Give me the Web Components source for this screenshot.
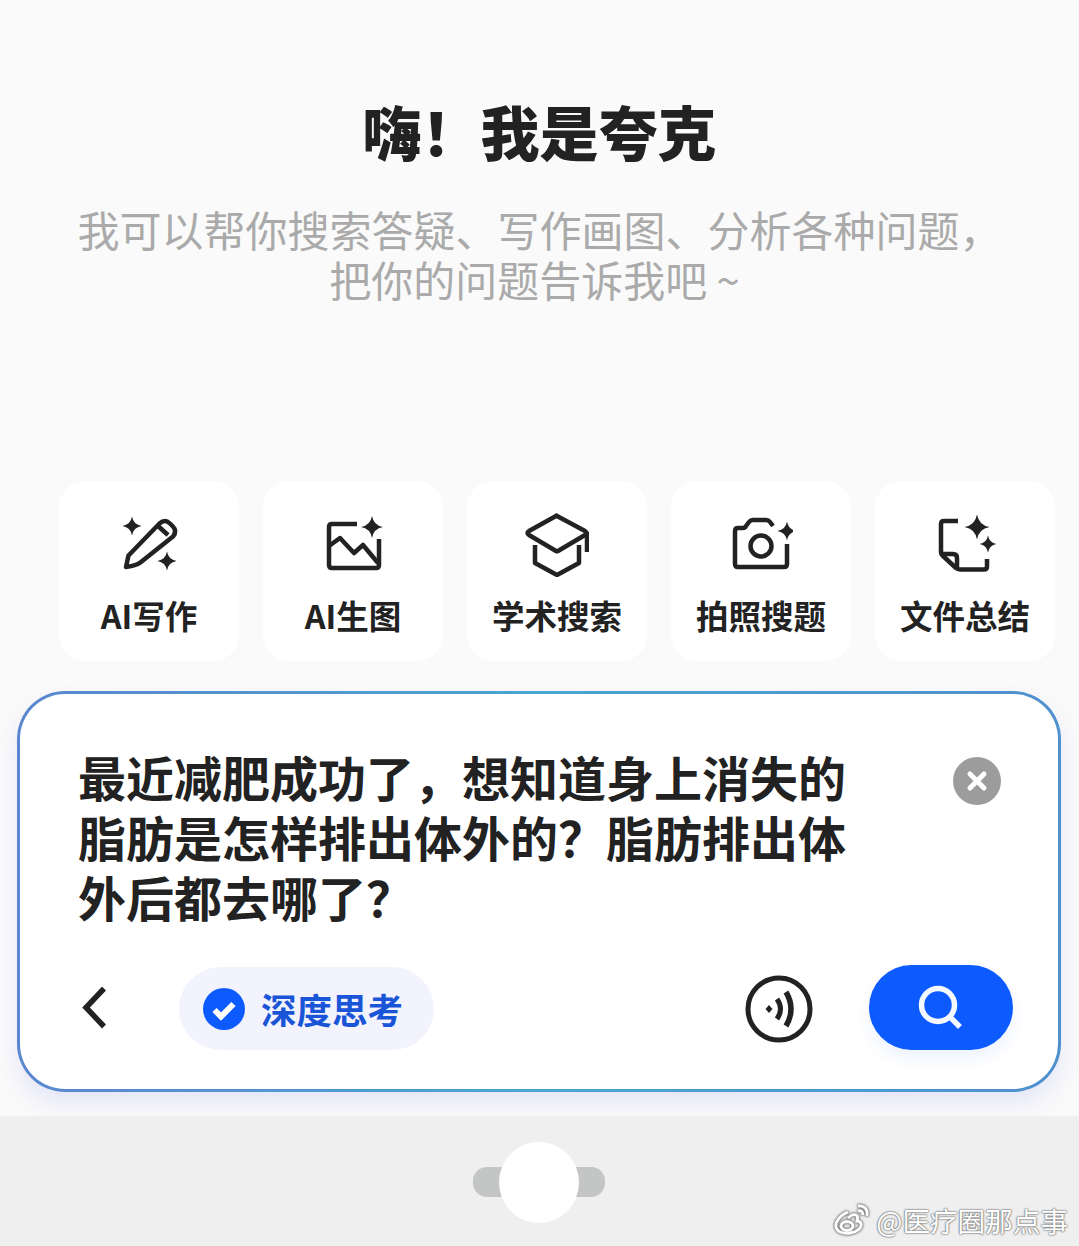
<!DOCTYPE html>
<html lang="zh">
<head>
<meta charset="utf-8">
<title>夸克</title>
<style>
    html, body { margin: 0; padding: 0; }
    body {
        width: 1079px;
        height: 1246px;
        overflow: hidden;
        background: #fafafa;
        font-family: "Noto Sans CJK SC", "Noto Sans", sans-serif;
    }
</style>
</head>
<body>
<quark-page>
    <quark-hero slot="hero">
        <span slot="title">嗨！我是夸克</span>
        我可以帮你搜索答疑、写作画图、分析各种问题，<br>把你的问题告诉我吧 <span style="margin-right: 10px">~</span>
    </quark-hero>
    <tool-card slot="tools" icon="write">AI写作</tool-card>
    <tool-card slot="tools" icon="image">AI生图</tool-card>
    <tool-card slot="tools" icon="study">学术搜索</tool-card>
    <tool-card slot="tools" icon="camera">拍照搜题</tool-card>
    <tool-card slot="tools" icon="file">文件总结</tool-card>
    <search-box slot="search">最近减肥成功了，想知道身上消失的<br>脂肪是怎样排出体外的？脂肪排出体<br>外后都去哪了？</search-box>
    <home-bar slot="bar"></home-bar>
</quark-page>

<script>
const star = (x, y, r) => `<path fill="#222" stroke="none" d="M${x} ${y - r}Q${x + r * .15} ${y - r * .15} ${x + r} ${y}Q${x + r * .15} ${y + r * .15} ${x} ${y + r}Q${x - r * .15} ${y + r * .15} ${x - r} ${y}Q${x - r * .15} ${y - r * .15} ${x} ${y - r}Z"/>`;

const toolIcons = {
    write: `<path d="M9 54l2.500-11.500L42.500 10.500q5.500-5 10.500 0l2.500 2.500q5 5 .5 10.500L24 49q-4 3.500-15 5z"/><path d="M41 13l10 9"/>` + star(15, 13, 9.500) + star(50, 48, 9.500),
    image: `<path d="M36 11H11q-3 0-3 3v38q0 3 3 3h44q3 0 3-3V26"/><path d="M8 33l11-8 14 15 9-8 15 18"/>` + star(51, 14, 11),
    study: `<path d="M32 3l28 15q3 2 0 4L33 38q-1 .5-2 0L4 22q-3-2 0-4L31 3q.5-.5 1 0z"/><path d="M10 32v18l22 12 22-12V32"/><path d="M62 19v20"/>`,
    camera: `<path d="M44 13l-3-4q-1.500-2-4-2H24q-2.500 0-4 2l-3 4q-1 2-3 2H9q-3 0-3 3v33q0 3 3 3h46q3 0 3-3V31"/><circle cx="32" cy="33" r="10.500"/>` + star(58, 18, 9.500),
    file: `<path d="M25 8H11q-3 0-3 3v28q0 2 1.500 3.500L23 55q1.500 1.500 4 1.500h24q3 0 3-3V46"/><path d="M8 41h12q4 0 4 4v11"/>` + star(44, 14, 12.500) + star(55, 31, 8.500)
};

class QuarkPage extends HTMLElement {
    constructor() {
        super();
        this.attachShadow({mode: 'open'});
        this.shadowRoot.innerHTML = `
        <style>
            :host {
                display: flex;
                flex-direction: column;
                width: 1079px;
                height: 1246px;
            }
            .tools {
                display: flex;
                gap: 24px;
                padding-left: 59px;
                margin-top: 177px;
            }
            .search {
                display: block;
                margin: 30px 18px 0 17px;
            }
            .bar {
                display: block;
                margin-top: auto;
            }
        </style>
        <slot name="hero"></slot>
        <div class="tools"><slot name="tools"></slot></div>
        <div class="search"><slot name="search"></slot></div>
        <div class="bar"><slot name="bar"></slot></div>
        `;
    }
}

class QuarkHero extends HTMLElement {
    constructor() {
        super();
        this.attachShadow({mode: 'open'});
        this.shadowRoot.innerHTML = `
        <style>
            :host {
                display: block;
                padding-top: 92px;
                text-align: center;
            }
            h1 {
                margin: 0;
                font-size: 59px;
                line-height: 78px;
                font-weight: 900;
                color: #222;
            }
            p {
                margin: 34px 0 0 0;
                font-size: 42px;
                line-height: 50px;
                color: #aaaaaa;
            }
        </style>
        <h1><slot name="title"></slot></h1>
        <p><slot></slot></p>
        `;
    }
}

class ToolCard extends HTMLElement {
    constructor() {
        super();
        this.attachShadow({mode: 'open'});
        this.shadowRoot.innerHTML = `
        <style>
            :host {
                display: flex;
                flex-direction: column;
                align-items: center;
                box-sizing: border-box;
                width: 180px;
                height: 180px;
                padding-top: 32px;
                background: #fff;
                border-radius: 26px;
                color: #222;
            }
            svg {
                width: 64px;
                height: 64px;
                fill: none;
                stroke: #222;
                stroke-width: 4.500;
                stroke-linejoin: round;
                stroke-linecap: butt;
            }
            span {
                margin-top: 15px;
                font-size: 32.500px;
                line-height: 46px;
                font-weight: 700;
            }
        </style>
        <svg viewBox="0 0 64 64" id="icon"></svg>
        <span><slot></slot></span>
        `;
    }

    connectedCallback() {
        this.shadowRoot.querySelector('#icon').innerHTML = toolIcons[this.getAttribute('icon')];
    }
}

class SearchBox extends HTMLElement {
    constructor() {
        super();
        this.attachShadow({mode: 'open'});
        this.shadowRoot.innerHTML = `
        <style>
            :host {
                display: block;
                position: relative;
                box-sizing: border-box;
                height: 401px;
                padding: 52px 58px 0 58px;
                border: 3.500px solid transparent;
                border-radius: 48px;
                background:
                    linear-gradient(#fff, #fff) padding-box,
                    linear-gradient(90deg, #5a86cf 0%, #4aa6d0 50%, #4f90cf 100%) border-box;
                box-shadow: 0 12px 22px rgba(80, 90, 240, 0.12);
            }
            .question {
                min-height: 180px;
                font-size: 48px;
                line-height: 60px;
                font-weight: 700;
                color: #222;
            }
            .close {
                position: absolute;
                top: 63px;
                right: 57px;
                width: 48px;
                height: 48px;
            }
            .actions {
                display: flex;
                align-items: center;
                margin-top: 41px;
                margin-left: 2px;
            }
            .back { width: 30px; height: 44px; }
            .think {
                display: flex;
                align-items: center;
                gap: 16px;
                box-sizing: border-box;
                width: 255px;
                height: 83px;
                margin-left: 69px;
                padding-left: 24px;
                border-radius: 42px;
                background: #f2f3fd;
                font-size: 35.500px;
                font-weight: 700;
                color: #1a55d8;
            }
            .think svg { width: 42px; height: 42px; }
            .voice { width: 68px; height: 68px; margin-left: auto; }
            .go {
                display: flex;
                align-items: center;
                justify-content: center;
                width: 144px;
                height: 85px;
                margin-left: 56px;
                margin-right: -13px;
                margin-top: -2px;
                border-radius: 43px;
                background: #0d5bff;
                box-shadow: 0 8px 16px rgba(13, 91, 255, 0.08);
            }
            .go svg { width: 46px; height: 46px; }
        </style>
        <div class="question"><slot></slot></div>
        <svg class="close" viewBox="0 0 48 48">
            <circle cx="24" cy="24" r="24" fill="#9c9c9c"/>
            <path d="M17 17l14 14M31 17L17 31" stroke="#fff" stroke-width="5" stroke-linecap="round"/>
        </svg>
        <div class="actions">
            <svg class="back" viewBox="0 0 30 44" fill="none" stroke="#222" stroke-width="5.500">
                <path d="M24 1.500L6 20.500l18 19"/>
            </svg>
            <div class="think">
                <svg viewBox="0 0 42 42">
                    <circle cx="21" cy="21" r="21" fill="#0d5bff"/>
                    <path d="M11.500 22l6.500 6.500L30.500 16" fill="none" stroke="#fff" stroke-width="6"/>
                </svg>
                <span>深度思考</span>
            </div>
            <svg class="voice" viewBox="0 0 68 68" fill="none" stroke="#222">
                <circle cx="34" cy="34" r="31" stroke-width="5"/>
                <path d="M24 30l-3.500 4 3.500 4 3.500-4z" fill="#222" stroke="none"/>
                <path d="M32 24q7 10 0 20" stroke-width="5"/>
                <path d="M41 17q10 17 0 34" stroke-width="5.500"/>
            </svg>
            <div class="go">
                <svg viewBox="0 0 46 46" fill="none" stroke="#f4f8ff" stroke-width="5.500">
                    <circle cx="20" cy="20" r="16.500"/>
                    <path d="M32 32l10 10"/>
                </svg>
            </div>
        </div>
        `;
    }
}

class HomeBar extends HTMLElement {
    constructor() {
        super();
        this.attachShadow({mode: 'open'});
        this.shadowRoot.innerHTML = `
        <style>
            :host {
                display: flex;
                align-items: center;
                justify-content: center;
                position: relative;
                height: 130px;
                background: #efefef;
            }
            .pill {
                position: relative;
                width: 132px;
                height: 30px;
                margin: 2px 2px 0 0;
                border-radius: 14px;
                background: #c4c6c6;
            }
            .knob {
                position: absolute;
                left: 26px;
                top: -25px;
                width: 80px;
                height: 81px;
                border-radius: 50%;
                background: #fff;
            }
            .mark {
                position: absolute;
                right: 11px;
                bottom: 8px;
                display: flex;
                align-items: center;
                gap: 6px;
                font-size: 27.600px;
                line-height: 36px;
                color: #fff;
                text-shadow: 0 0 2px #777, 0 0 2px #777, 0 0 1px #777;
            }
            .mark svg { width: 36px; height: 32px; margin-top: -2px; filter: drop-shadow(0 0 1px #777) drop-shadow(0 0 1px #777); }
        </style>
        <div class="pill"><div class="knob"></div></div>
        <div class="mark">
            <svg viewBox="0 0 36 32" fill="none" stroke="#fff" stroke-width="2.800">
                <path d="M14 9C6 12 1 19 2 24c1 5 8 7 14 6 7-1 12-5 11-9-.5-2-2-3-4-3 1-3 1-5-1-6-2-1-5 0-8 3"/>
                <ellipse cx="13" cy="23" rx="6" ry="4.500"/>
                <path d="M24 8c3-1 5 1 5 4M24 3c6-1 10 3 9 10"/>
            </svg>
            <span>@医疗圈那点事</span>
        </div>
        `;
    }
}

window.customElements.define('quark-page', QuarkPage);
window.customElements.define('quark-hero', QuarkHero);
window.customElements.define('tool-card', ToolCard);
window.customElements.define('search-box', SearchBox);
window.customElements.define('home-bar', HomeBar);
</script>
</body>
</html>
